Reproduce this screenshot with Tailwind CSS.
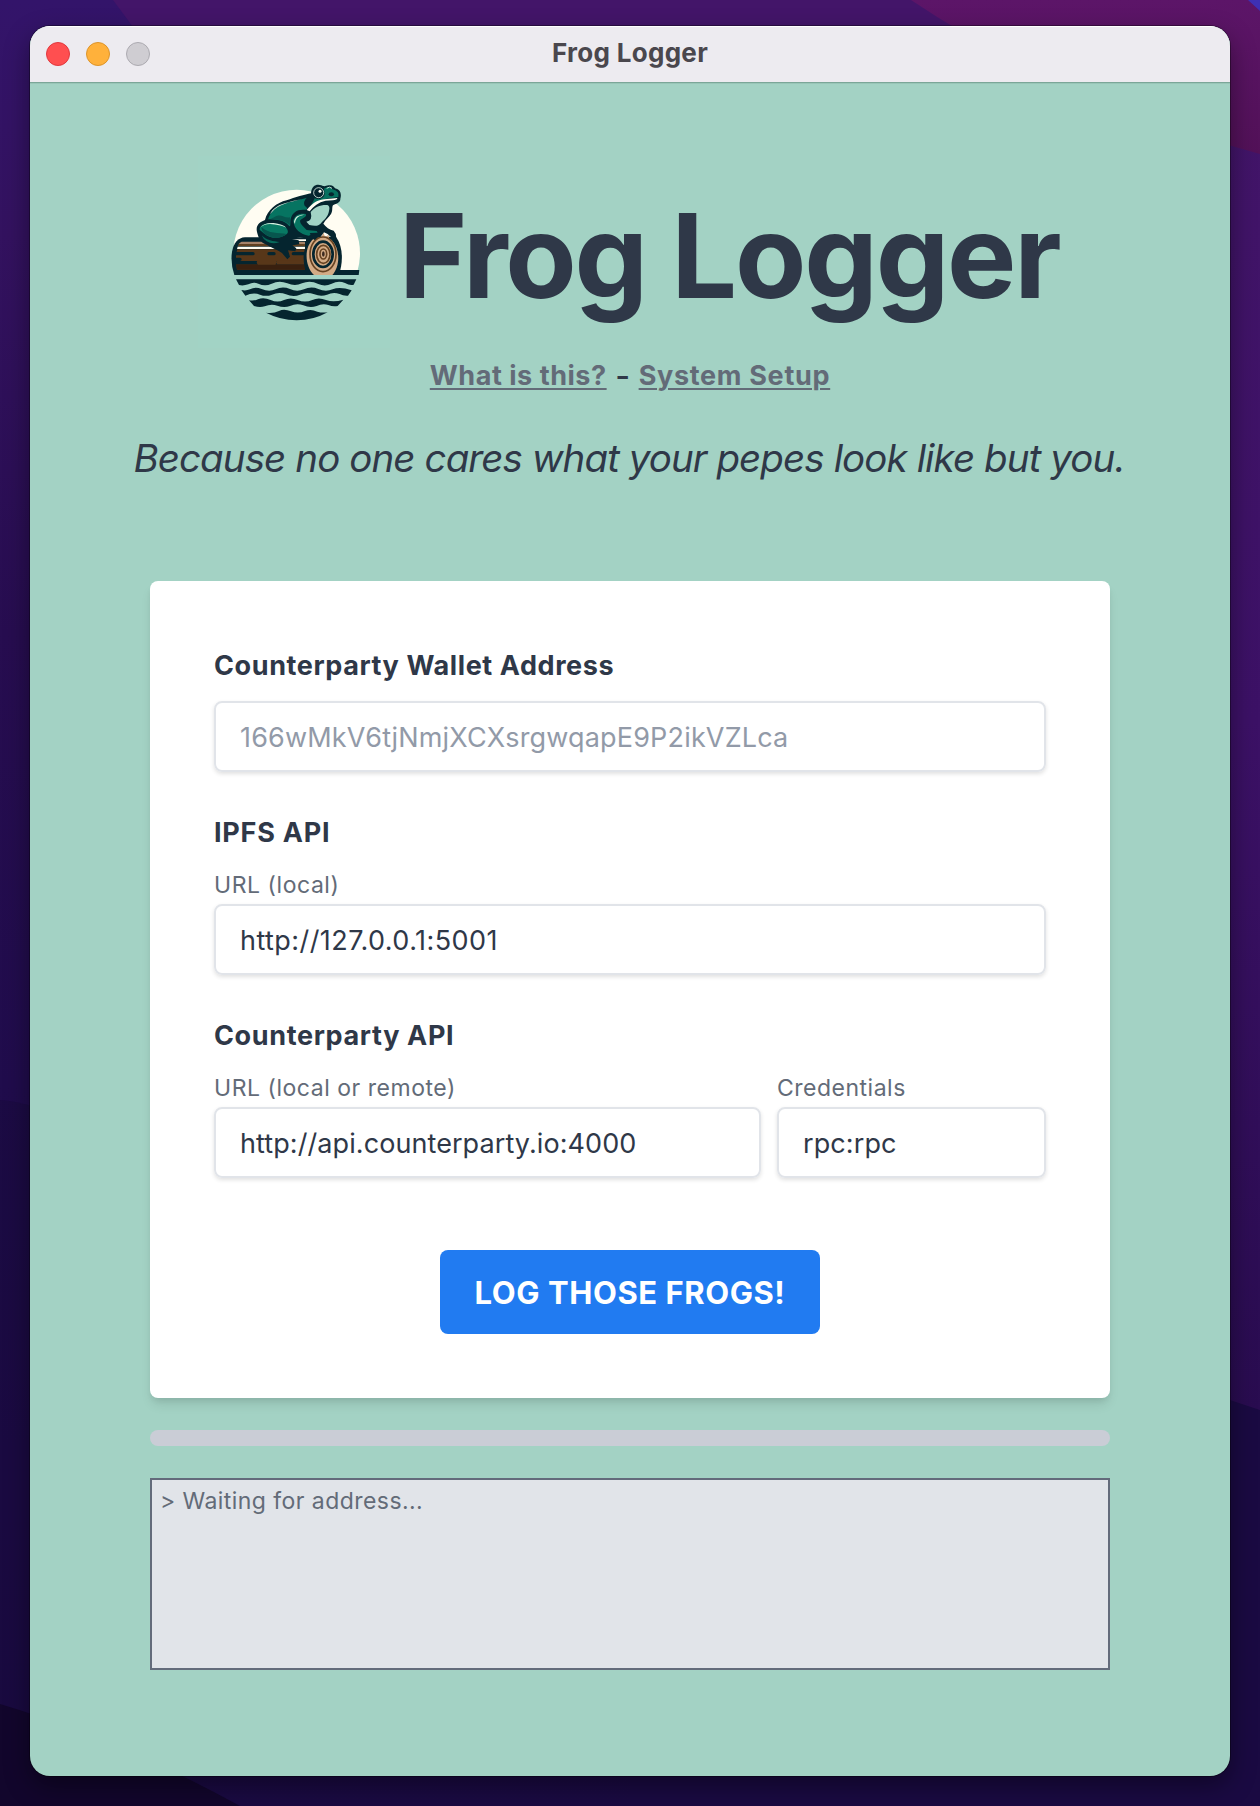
<!DOCTYPE html>
<html lang="en">
<head>
<meta charset="utf-8">
<title>Frog Logger</title>
<script src="https://cdn.jsdelivr.net/npm/@tailwindcss/browser@4"></script>
</head>
<body class="relative w-[1260px] h-[1806px] overflow-hidden bg-[#1a0b40] font-['Inter',sans-serif] text-[#2f3848]">

<!-- Desktop wallpaper -->
<svg class="absolute inset-0" width="1260" height="1806" viewBox="0 0 1260 1806" aria-hidden="true">
  <defs>
    <linearGradient id="left" x1="0" y1="0" x2="0" y2="1"><stop offset="0" stop-color="#33146a"/><stop offset=".13" stop-color="#33125f"/><stop offset=".35" stop-color="#270d50"/><stop offset=".6" stop-color="#200c4c"/><stop offset="1" stop-color="#1a0a42"/></linearGradient>
    <linearGradient id="right" x1="0" y1="0" x2="0" y2="1"><stop offset="0" stop-color="#431569"/><stop offset=".5" stop-color="#3c1166"/><stop offset="1" stop-color="#290c50"/></linearGradient>
    <linearGradient id="magenta" x1="0" y1="0" x2="0" y2="1"><stop offset="0" stop-color="#5c1568"/><stop offset="1" stop-color="#521158"/></linearGradient>
  </defs>
  <rect width="630" height="1806" fill="url(#left)"/>
  <rect x="630" width="630" height="1806" fill="#1a0a42"/>
  <path d="M0 1100 Q20 1101 60 1115V1806H0Z" fill="#170a3c" opacity=".5"/>
  <path d="M0 1704 Q120 1740 240 1806H0Z" fill="#12062c"/>
  <path d="M113 0 L150 50 H1260V0Z" fill="#431569"/>
  <path d="M630 30H1260V1410L1200 1390H630Z" fill="url(#right)"/>
  <path d="M911 0 Q1060 100 1260 154V0Z" fill="url(#magenta)"/>
  <path d="M1248 0 L1260 11V0Z" fill="#3e30b4"/>
</svg>

<div class="relative mt-[26px] ml-[30px] flex h-[1750px] w-[1200px] flex-col overflow-hidden rounded-[20px] bg-[#a3d2c4] shadow-[0_0_0_1px_rgba(0,0,0,0.35),0_10px_26px_rgba(0,0,0,0.4)]">

  <!-- Title bar -->
  <header class="relative flex h-14 shrink-0 items-center bg-[#edebf0] px-4 shadow-[inset_0_1px_0_#ffffff,0_1px_0_#7ba698,0_2px_0_#98c5b7]">
    <div class="flex gap-4">
      <span class="size-6 rounded-full border border-[#e0383e] bg-[#ff4f50]"></span>
      <span class="size-6 rounded-full border border-[#dc942b] bg-[#ffb13b]"></span>
      <span class="size-6 rounded-full border border-[#acaab0] bg-[#cfcdd2]"></span>
    </div>
    <div class="absolute inset-x-0 top-[7px] text-center text-[26px] leading-10 font-bold tracking-[0.3px] text-[#4a474d]">Frog Logger</div>
  </header>

  <main class="flex flex-col px-[120px] pt-[74px]">
    <!-- Logo and heading -->
    <div class="flex h-48 pl-12">
      <svg class="size-48 shrink-0" viewBox="24 18 576 576" role="img" aria-label="Frog on a log">
        <rect x="24" y="18" width="576" height="576" fill="#a2d3c5"/>
        <!-- moon and horizon -->
        <path d="M137.5 362 A190 190 0 1 1 502.5 362Z" fill="#fffdf2"/>
        <path d="M440 360H508L506 375H440Z" fill="#05252f"/>
        <!-- log -->
        <path d="M133 375 Q121 340 126 305 Q134 264 165 262H400V375Z" fill="#05252f"/>
        <path d="M141 359 Q134 320 142 298 H345 V359Z" fill="#583719"/>
        <path d="M138 343 H345V359H141Z" fill="#39200f"/>
        <path d="M155 275 H345V282H146Q149 277 155 275Z" fill="#a58268"/>
        <path d="M146 282H345V289H143Z" fill="#60401f"/>
        <path d="M143 290H345V297H141Z" fill="#fffdf2"/>
        <path d="M290 268H348V273H290Z" fill="#fffdf2"/>
        <g stroke="#05252f" stroke-width="10" stroke-linecap="round" fill="none">
          <path d="M138 311H189M237 311H252M310 311H340M137 338H345M137 328H150"/>
        </g>
        <path d="M204 330 H256 Q262 338 256 344 H204 Q196 337 204 330Z" fill="#583719"/>
        <path d="M262 331H342V343H262Q254 337 262 331Z" fill="#583719"/>
        <!-- log end -->
        <path d="M352 375 C333 335 338 278 370 260 L438 260 C460 290 460 340 446 375Z" fill="#05252f"/>
        <path d="M372 375 C344 350 341 290 371 266 L380 270 386 255 393 263 400 248 406 262 415 254 418 267 425 270 C452 298 450 350 427 375Z" fill="#d3ab85"/>
        <ellipse cx="399" cy="313" rx="39" ry="52" fill="none" stroke="#674322" stroke-width="5"/>
        <ellipse cx="399" cy="313" rx="29" ry="38" fill="#d3ab85" stroke="#05252f" stroke-width="8"/>
        <ellipse cx="400" cy="313" rx="20" ry="27" fill="none" stroke="#674322" stroke-width="5"/>
        <ellipse cx="400" cy="312" rx="10" ry="15" fill="none" stroke="#674322" stroke-width="5"/>
        <ellipse cx="400" cy="312" rx="4" ry="8" fill="#3c2b20"/>
        <!-- frog silhouette -->
        <path d="M201 246 C196 225 210 216 225 210 C232 180 260 158 290 151 C315 142 345 134 363 130 C364 107 380 101 394 106 C405 111 405 108 416 106 C427 104 432 110 435 115 C452 119 455 132 451 146 C452 157 441 161 429 166 C425 172 429 183 423 192 C417 202 407 208 400 221 C407 231 419 239 431 242 Q440 251 438 266 C428 266 420 260 413 252 L402 247 L392 260 L379 263 L375 271 L365 264 L352 266 L330 262 L306 267 L326 271 L328 283 L307 286 L319 295 L316 304 L294 301 L300 320 L292 328 L276 309 C257 296 240 291 230 284 C211 278 205 263 201 246Z" fill="#05252f"/>
        <!-- back -->
        <path d="M234 208 C242 181 264 166 293 158 L352 143 C340 151 342 165 348 171 C356 177 349 180 342 179 C320 178 307 188 302 207 C300 219 303 233 297 227 C283 210 255 208 234 208Z" fill="#067461"/>
        <path d="M255 200 C275 190 282 206 300 202 L299 225 C286 212 268 208 240 208Z" fill="#07564e"/>
        <path d="M240 192 C252 170 270 160 338 147 C300 156 266 162 246 186Z" fill="#d7f0df"/>
        <!-- head -->
        <path d="M356 177 C365 164 370 153 374 145 C387 151 402 145 404 132 L402 116 Q417 107 428 118 Q450 124 445 141 L410 146 C390 150 375 160 356 177Z" fill="#06705f"/>
        <path d="M350 180 C370 156 386 148 411 147 L442 144 Q442 150 428 151 L407 152 C385 156 371 169 359 184Z" fill="#fffdf2"/>
        <path d="M410 115Q419 108 426 115" stroke="#c4e6d9" stroke-width="3" fill="none"/>
        <ellipse cx="424" cy="133" rx="8" ry="6" fill="#05252f"/>
        <circle cx="386" cy="128" r="15" fill="#05252f" stroke="#dfeee4" stroke-width="2.5"/>
        <circle cx="390" cy="124" r="4.5" fill="#fffdf2"/>
        <path d="M345 151 Q353 139 365 139 Q370 144 359 156 Q350 169 344 167 Q340 160 345 151Z" fill="#05252f"/>
        <!-- throat -->
        <path d="M362 186 C374 172 390 164 412 165 Q421 168 417 183 C414 199 404 209 396 216 C387 230 374 229 358 225 L349 215 Q369 213 362 186Z" fill="#a2d3c5"/>
        <!-- front leg -->
        <path d="M310 213 C312 195 331 188 347 192 C353 198 340 204 331 210 C327 219 341 231 350 240 L380 243 L383 248 L359 249 Q365 255 356 257 C331 252 313 239 310 213Z" fill="#067461"/>
        <path d="M312 216 C314 198 329 193 344 194 C325 197 316 204 315 222Z" fill="#d7f0df"/>
        <!-- hind leg -->
        <path d="M209 240 C207 221 235 217 260 221 C285 225 297 237 293 249 C285 259 264 266 249 263 C228 259 218 246 209 240Z" fill="#087963"/>
        <path d="M214 231 C237 252 264 248 290 252 C277 263 262 265 249 263 C225 257 215 246 214 231Z" fill="#07564e"/>
        <path d="M211 233 Q220 218 250 219 Q279 222 289 233 Q270 224 240 222 Q220 223 211 233Z" fill="#d7f0df"/>
        <path d="M215 256 C230 272 250 274 269 276 Q247 284 230 274Q219 267 215 256Z" fill="#07695a"/>
        <!-- water -->
        <g fill="#05252f">
          <path d="M138 388H499L491 404Q480 408 465 399Q445 391 425 401Q405 411 385 402Q360 389 336 400Q315 410 292 400Q268 390 245 401Q225 411 205 401Q190 394 175 403Q160 408 147 405Z"/>
          <path d="M154 420Q168 423 180 418Q195 409 215 417Q237 427 257 418Q277 408 300 417Q320 427 342 418Q363 408 385 417Q407 427 428 418Q450 409 485 421L474 437Q460 438 449 432Q430 425 411 434Q393 441 373 433Q350 424 330 434Q310 442 288 433Q267 424 246 434Q228 441 210 434Q190 426 166 437Z"/>
          <path d="M177 451Q195 453 204 448Q220 440 242 450Q263 459 282 450Q302 441 323 450Q345 459 367 450Q386 441 408 450Q430 458 460 449L443 468Q429 471 415 465Q397 460 380 468Q360 475 340 466Q320 459 300 468Q282 475 262 467Q243 461 224 469Q209 473 192 468Z"/>
          <path d="M228 488Q250 491 267 483Q282 475 303 484Q325 492 345 483Q363 476 382 485Q395 489 413 487Q370 511 320 511Q270 510 228 488Z"/>
        </g>
      </svg>
      <h1 class="ml-[9px] mt-[26px] text-[116.5px] leading-[148px] font-bold tracking-[-2.2px] whitespace-nowrap">Frog Logger</h1>
    </div>

    <nav class="mt-2 flex justify-center text-[27px] leading-10 font-bold text-[#636b78]">
      <a class="tracking-[0.53px] underline decoration-2 underline-offset-[3px]">What is this?</a>
      <span class="w-8 text-center text-[32px] font-medium text-[#2f3848]">-</span>
      <a class="tracking-[0.69px] underline decoration-2 underline-offset-[3px]">System Setup</a>
    </nav>

    <p class="mt-[38px] -mr-4 -ml-[18px] text-center text-[38.5px] leading-[48px] tracking-[-0.9px] whitespace-nowrap italic">Because no one cares what your pepes look like but you.</p>

    <!-- Form card -->
    <section class="mt-[99px] flex h-[817px] flex-col rounded-lg bg-white px-16 pt-[65px] shadow-[0_8px_12px_-2px_rgba(0,0,0,0.1),0_4px_6px_-2px_rgba(0,0,0,0.08)]">
      <h2 class="text-[27px] leading-10 font-bold tracking-[0.6px]">Counterparty Wallet Address</h2>
      <div class="mt-[15px] h-[71px] rounded-lg border-2 border-[#e1e4e9] px-6 text-[27px] leading-[69px] tracking-[0.17px] text-[#929aa8] shadow-[0_2px_4px_rgba(0,0,0,0.12)]">166wMkV6tjNmjXCXsrgwqapE9P2ikVZLca</div>

      <h2 class="mt-[41px] text-[27px] leading-10 font-bold tracking-[0.75px]">IPFS API</h2>
      <div class="mt-[14px] text-[23px] leading-9 tracking-[0.55px] text-[#636b78]">URL (local)</div>
      <div class="mt-px h-[71px] rounded-lg border-2 border-[#e1e4e9] px-6 text-[27px] leading-[69px] tracking-[0.44px] shadow-[0_2px_4px_rgba(0,0,0,0.12)]">http://127.0.0.1:5001</div>

      <h2 class="mt-[41px] text-[27px] leading-10 font-bold tracking-[0.65px]">Counterparty API</h2>
      <div class="mt-[14px] flex gap-4">
        <div class="w-[547px]">
          <div class="text-[23px] leading-9 tracking-[0.53px] text-[#636b78]">URL (local or remote)</div>
          <div class="mt-px h-[71px] rounded-lg border-2 border-[#e1e4e9] px-6 text-[27px] leading-[69px] tracking-[0.08px] shadow-[0_2px_4px_rgba(0,0,0,0.12)]">http://api.counterparty.io:4000</div>
        </div>
        <div class="flex-1">
          <div class="text-[23px] leading-9 tracking-[0.5px] text-[#636b78]">Credentials</div>
          <div class="mt-px h-[71px] rounded-lg border-2 border-[#e1e4e9] px-6 text-[27px] leading-[69px] tracking-[0.1px] shadow-[0_2px_4px_rgba(0,0,0,0.12)]">rpc:rpc</div>
        </div>
      </div>

      <button class="mt-[72px] h-[84px] w-[380px] self-center rounded-lg bg-[#217bf1] pt-px text-[31px] leading-[84px] font-bold tracking-[0.56px] text-white">LOG THOSE FROGS!</button>
    </section>

    <div class="mt-8 h-4 rounded-full bg-[#cacdd6]"></div>

    <!-- Log output -->
    <div class="mt-8 h-48 border-2 border-[#636b7b] bg-[#e1e4e9] px-2 pt-px text-[23px] leading-10 tracking-[0.44px] text-[#636b78]">&gt; Waiting for address...</div>
  </main>
</div>
</body>
</html>
